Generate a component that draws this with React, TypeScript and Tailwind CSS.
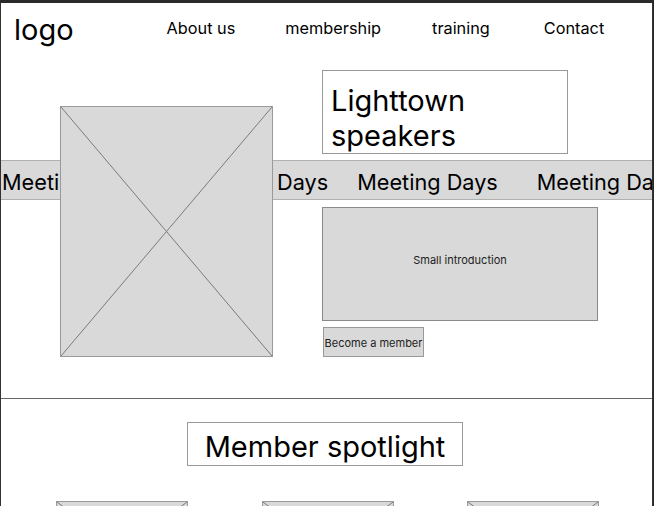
import React from "react";

function Placeholder({ className }: { className: string }) {
  return (
    <div className={"relative bg-[#d9d9d9] border border-[#9a9a9a] " + className}>
      <svg className="absolute inset-0 w-full h-full" viewBox="0 0 100 100" preserveAspectRatio="none">
        <line x1="0" y1="0" x2="100" y2="100" stroke="#7a7a7a" strokeWidth="1" vectorEffect="non-scaling-stroke" />
        <line x1="100" y1="0" x2="0" y2="100" stroke="#7a7a7a" strokeWidth="1" vectorEffect="non-scaling-stroke" />
      </svg>
    </div>
  );
}

export default function App() {
  return (
    <div className="w-[654px] h-[506px] overflow-hidden bg-[#2a2a2a] pt-[3px]" style={{ fontFamily: "Inter, 'Noto Sans', sans-serif" }}>
      <div className="w-[653px] h-[503px] bg-white border-l border-r border-[#333] overflow-hidden">
        {/* header */}
        <div className="h-[57px] flex items-center">
          <div className="ml-[13px] text-[29px] leading-none text-black -mt-[5px]">logo</div>
          <nav className="ml-[93px] flex items-center text-[16.3px] text-black -mt-[6px]">
            <span>About us</span>
            <span className="ml-[50px]">membership</span>
            <span className="ml-[51px]">training</span>
            <span className="ml-[54px]">Contact</span>
          </nav>
        </div>

        {/* hero */}
        <div className="relative h-[339px] border-b border-[#666]">
          <div className="absolute left-0 right-0 top-[100px] h-[40px] bg-[#d9d9d9] border-t border-b border-[#b0b0b0] flex items-center overflow-hidden whitespace-nowrap">
            <div className="flex pl-[1px] pt-[5px] text-[21.7px] text-black">
              <span>Meeting Days</span>
              <span className="ml-[45px]">Meeting Days</span>
              <span className="ml-[29px]">Meeting Days</span>
              <span className="ml-[39px]">Meeting Days</span>
            </div>
          </div>
          <div className="relative flex">
            <Placeholder className="ml-[59px] mt-[46px] w-[213px] h-[251px]" />
            <div className="ml-[49px] flex flex-col items-start">
              <div className="mt-[10px] w-[246px] h-[84px] bg-white border border-[#999] pl-[8px] pt-[12px] text-[29px] leading-[35px] text-black">
                Lighttown
                <br />
                speakers
              </div>
              <div className="mt-[53px] w-[276px] h-[114px] bg-[#d9d9d9] border border-[#8a8a8a] flex items-center justify-center pb-[8px] text-[11px] text-[#222]">
                Small introduction
              </div>
              <div className="mt-[6px] ml-[1px] w-[101px] h-[30px] bg-[#d9d9d9] border border-[#999] flex items-center justify-center pt-[2px] text-[11px] text-[#222]">
                Become a member
              </div>
            </div>
          </div>
        </div>

        {/* spotlight */}
        <div className="pt-[23px] flex justify-center">
          <div className="ml-[-3px] w-[276px] h-[44px] border border-[#999] flex items-center justify-center pt-[6px] text-[29px] text-black">
            Member spotlight
          </div>
        </div>
        <div className="mt-[35px] flex pl-[55px]">
          <Placeholder className="w-[132px] h-[100px]" />
          <Placeholder className="ml-[74px] w-[132px] h-[100px]" />
          <Placeholder className="ml-[73px] w-[132px] h-[100px]" />
        </div>
      </div>
    </div>
  );
}
